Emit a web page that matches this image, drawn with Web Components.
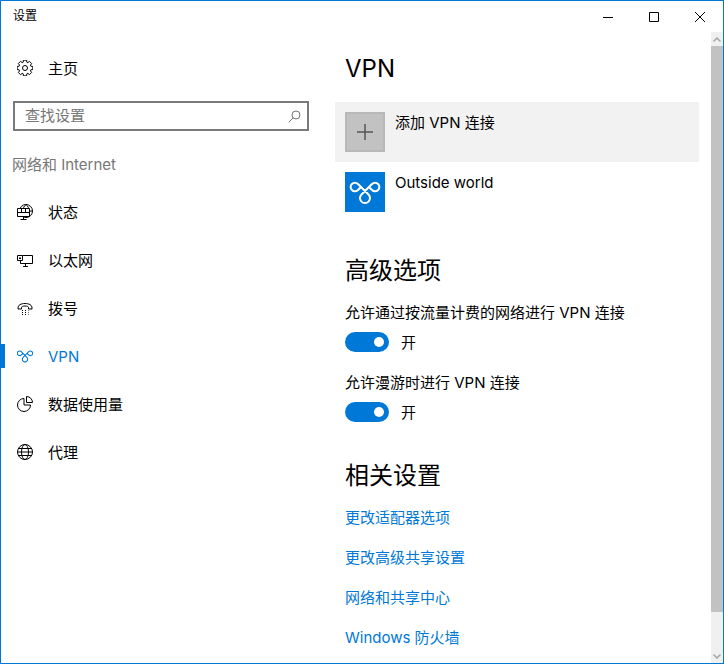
<!DOCTYPE html>
<html lang="zh">
<head>
<meta charset="utf-8">
<title>设置</title>
<style>
  html, body { margin: 0; height: 100%; overflow: hidden; background: #fff; }
  body { font: 15px/24px Inter, "Noto Sans CJK SC", sans-serif; color: #000; }
</style>
</head>
<body>
<settings-window>
  <title-bar>设置</title-bar>
  <side-nav slot="side"></side-nav>
  <vpn-page slot="main"></vpn-page>
  <scroll-bar slot="bar"></scroll-bar>
</settings-window>

<script>
// icons, all on a 16 box except the knot
function gearPath() {
  let d = '';
  for (let i = 0; i < 8; i++) {
    const a = i * Math.PI / 4;
    const pts = [[-0.30, 6.1], [-0.2, 8], [0.2, 8], [0.30, 6.1]];
    pts.forEach((p, j) => {
      const x = 8 + p[1] * Math.sin(a + p[0]);
      const y = 8 - p[1] * Math.cos(a + p[0]);
      d += (i === 0 && j === 0 ? 'M' : 'L') + x.toFixed(2) + ' ' + y.toFixed(2);
    });
  }
  return d + 'Z';
}

const knot = 'M23.500 22.500 13 12A4.300 4.300 0 1 0 13 18L16 15M16.500 22.500 27 12A4.300 4.300 0 1 1 27 18L24 15M16.500 22.500A5 5 0 1 0 23.500 22.500';

const ICONS = {
  home: `<path d="${gearPath()}"/><circle cx="8" cy="8" r="2.500"/>`,
  status: `<circle cx="9" cy="7" r="6.500"/><path d="M9 .5c-2 1.500-3 3.800-3 6.500s1 5 3 6.500c2-1.500 3-3.800 3-6.500S11 2 9 .5zM2.500 7h13"/><path d="M.5 4.500h12v8H.5z" fill="#fff"/><path d="M.5 8.500h12M4.500 4.500v4M8.500 4.500v4M6.500 12.500v2.500M3.500 15.500h6"/>`,
  ether: `<path d="M5.500 3.500h10v8h-12V8.500M8.500 11.500v3M6 14.500h5"/><path d="M.5 3.500h5v5h-5z" fill="#fff"/><path d="M2 5.500h2v1.500H2z" fill="currentColor" stroke="none"/>`,
  dial: `<path d="M1 8C1 5 4 3.500 8 3.500S15 5 15 8v1h-3.500V7.500C11.500 6.500 10 6 8 6S4.500 6.500 4.500 7.500V9H1z"/><path stroke-dasharray="1 2" d="M5 10.500h6.500M5 12.500h6.500M5 14.500h6.500"/>`,
  data: `<path d="M7 2.500a6.500 6.500 0 1 0 6.500 6.500H7z"/><path d="M9.500.5a6 6 0 0 1 6 6h-6z"/>`,
  proxy: `<circle cx="8" cy="8" r="7.500"/><ellipse cx="8" cy="8" rx="3.500" ry="7.500"/><path d="M.5 8h15M1.500 4.500h13M1.500 11.500h13"/>`
};

function lineIcon(name) {
  return `<svg width="16" height="16" viewBox="0 0 16 16" fill="none" stroke="currentColor" stroke-width="1">${ICONS[name]}</svg>`;
}

class SettingsWindow extends HTMLElement {
  constructor() {
    super();
    this.attachShadow({ mode: 'open' });
    this.shadowRoot.innerHTML = `
      <style>
        :host { display: flex; flex-direction: column; box-sizing: border-box; width: 724px; height: 664px; border: 1px solid #0078d7; overflow: hidden; background: #fff; }
        .body { display: flex; flex: 1; min-height: 0; }
        ::slotted([slot=side]) { width: 334px; flex: none; }
        ::slotted([slot=main]) { flex: 1; min-width: 0; }
      </style>
      <slot></slot>
      <div class="body">
        <slot name="side"></slot>
        <slot name="main"></slot>
        <slot name="bar"></slot>
      </div>`;
  }
}

class TitleBar extends HTMLElement {
  constructor() {
    super();
    this.attachShadow({ mode: 'open' });
    this.shadowRoot.innerHTML = `
      <style>
        :host { display: flex; align-items: center; height: 31px; padding-left: 12px; font-size: 12px; }
        .title { flex: 1; margin-top: -2px; }
        .btn { width: 46px; height: 31px; display: flex; align-items: center; justify-content: center; }
        svg { display: block; }
      </style>
      <span class="title"><slot></slot></span>
      <span class="btn"><svg width="10" height="10" viewBox="0 0 10 10" stroke="#000" fill="none"><path d="M0 5.500h10"/></svg></span>
      <span class="btn"><svg width="10" height="10" viewBox="0 0 10 10" stroke="#000" fill="none"><path d="M.5.5h9v9h-9z"/></svg></span>
      <span class="btn"><svg width="10" height="10" viewBox="0 0 10 10" stroke="#000" fill="none"><path d="M0 0l10 10M10 0L0 10"/></svg></span>`;
  }
}

class NavItem extends HTMLElement {
  constructor() {
    super();
    this.attachShadow({ mode: 'open' });
  }
  connectedCallback() {
    const active = this.hasAttribute('active');
    const icon = this.getAttribute('icon');
    this.shadowRoot.innerHTML = `
      <style>
        :host { display: flex; align-items: center; position: relative; height: 48px; padding-left: 16px; gap: 15px; color: ${active ? '#0078d7' : '#000'}; }
        .mark { position: absolute; left: 0; top: 12px; width: 4px; height: 24px; background: #0078d7; }
        .txt { padding-top: 2px; }
        svg { display: block; flex: none; }
      </style>
      ${active ? '<span class="mark"></span>' : ''}
      ${icon === 'vpn'
        ? `<svg width="16" height="16" viewBox="5 5 30 30" fill="none" stroke="currentColor" stroke-width="2"><path d="${knot}"/></svg>`
        : lineIcon(icon)}
      <span class="txt"><slot></slot></span>`;
  }
}

class SearchBox extends HTMLElement {
  constructor() {
    super();
    this.attachShadow({ mode: 'open' });
    this.shadowRoot.innerHTML = `
      <style>
        :host { display: flex; align-items: center; box-sizing: border-box; height: 30px; margin: 9px 26px 0 12px; padding: 0 6px 0 10px; border: 2px solid #7a7a7a; color: #767676; }
        span { flex: 1; }
        svg { display: block; }
      </style>
      <span><slot></slot></span>
      <svg width="13" height="13" viewBox="0 0 13 13" fill="none" stroke="#767676"><circle cx="8" cy="5" r="4"/><path d="M5.200 7.800.7 12.300"/></svg>`;
  }
}

class SideNav extends HTMLElement {
  constructor() {
    super();
    this.attachShadow({ mode: 'open' });
    this.shadowRoot.innerHTML = `
      <style>
        :host { display: block; padding-top: 12px; }
        .cat { margin: 22px 0 11px 11px; color: #767676; }
      </style>
      <nav-item icon="home">主页</nav-item>
      <search-box>查找设置</search-box>
      <div class="cat">网络和 Internet</div>
      <nav-item icon="status">状态</nav-item>
      <nav-item icon="ether">以太网</nav-item>
      <nav-item icon="dial">拨号</nav-item>
      <nav-item icon="vpn" active>VPN</nav-item>
      <nav-item icon="data">数据使用量</nav-item>
      <nav-item icon="proxy">代理</nav-item>`;
  }
}

class VpnTile extends HTMLElement {
  constructor() {
    super();
    this.attachShadow({ mode: 'open' });
  }
  connectedCallback() {
    const add = this.hasAttribute('add');
    this.shadowRoot.innerHTML = `
      <style>
        :host { display: flex; gap: 10px; height: 60px; box-sizing: border-box; padding: 10px; background: ${add ? '#f2f2f2' : '#fff'}; }
        .ico { width: 40px; height: 40px; box-sizing: border-box; display: flex; align-items: center; justify-content: center; flex: none; }
        .plus { background: #c2c2c2; border: 2px solid #b8b8b8; }
        .blue { background: #0078d7; }
        .txt { margin-top: -1px; }
        svg { display: block; }
      </style>
      ${add
        ? '<span class="ico plus"><svg width="16" height="16" viewBox="0 0 16 16" stroke="#555" stroke-width="1.500"><path d="M8 0v16M0 8h16"/></svg></span>'
        : `<span class="ico blue"><svg width="40" height="40" viewBox="0 0 40 40" fill="none" stroke="#fff" stroke-width="2"><path d="${knot}"/></svg></span>`}
      <span class="txt"><slot></slot></span>`;
  }
}

class ToggleRow extends HTMLElement {
  constructor() {
    super();
    this.attachShadow({ mode: 'open' });
    this.shadowRoot.innerHTML = `
      <style>
        :host { display: block; margin-left: 10px; }
        .label { display: block; padding-top: 1px; }
        .row { display: flex; align-items: center; gap: 12px; height: 20px; margin-top: 7px; }
        .sw { width: 44px; height: 20px; border-radius: 10px; background: #0078d7; display: flex; align-items: center; justify-content: flex-end; padding-right: 5px; box-sizing: border-box; }
        .dot { width: 10px; height: 10px; border-radius: 50%; background: #fff; }
        .state { padding-top: 2px; }
      </style>
      <span class="label"><slot></slot></span>
      <div class="row"><span class="sw"><span class="dot"></span></span><span class="state">开</span></div>`;
  }
}

class VpnPage extends HTMLElement {
  constructor() {
    super();
    this.attachShadow({ mode: 'open' });
    this.shadowRoot.innerHTML = `
      <style>
        :host { display: block; padding: 17px 12px 0 0; }
        h2 { margin: 0 0 0 10px; font-size: 24px; line-height: 40px; font-weight: 400; }
        .tiles { margin-top: 13px; }
        .adv { line-height: 36px; margin-top: 31px; margin-bottom: 11px; }
        toggle-row + toggle-row { margin-top: 18px; }
        .rel { line-height: 36px; margin-top: 36px; margin-bottom: 9px; }
        .links { display: flex; flex-direction: column; gap: 10px; margin-left: 10px; }
        a { color: #0078d7; line-height: 30px; text-decoration: none; }
      </style>
      <h2>VPN</h2>
      <div class="tiles">
        <vpn-tile add>添加 VPN 连接</vpn-tile>
        <vpn-tile>Outside world</vpn-tile>
      </div>
      <h2 class="adv">高级选项</h2>
      <toggle-row>允许通过按流量计费的网络进行 VPN 连接</toggle-row>
      <toggle-row>允许漫游时进行 VPN 连接</toggle-row>
      <h2 class="rel">相关设置</h2>
      <div class="links">
        <a href="#">更改适配器选项</a>
        <a href="#">更改高级共享设置</a>
        <a href="#">网络和共享中心</a>
        <a href="#">Windows 防火墙</a>
      </div>`;
  }
}

class ScrollBar extends HTMLElement {
  constructor() {
    super();
    this.attachShadow({ mode: 'open' });
    this.shadowRoot.innerHTML = `
      <style>
        :host { display: flex; flex-direction: column; width: 12px; flex: none; background: #f0f0f0; }
        .arrow { height: 14px; display: flex; align-items: center; justify-content: center; }
        .thumb { height: 566px; background: #c2c2c2; }
        .space { flex: 1; }
        svg { display: block; }
      </style>
      <span class="arrow"><svg width="8" height="5" viewBox="0 0 8 5" fill="none" stroke="#a6a6a6" stroke-width="1.500"><path d="M.5 4.500l3.500-3.500 3.500 3.500"/></svg></span>
      <div class="thumb"></div>
      <div class="space"></div>
      <span class="arrow"><svg width="8" height="5" viewBox="0 0 8 5" fill="none" stroke="#a6a6a6" stroke-width="1.500"><path d="M.5.5l3.500 3.500 3.500-3.500"/></svg></span>`;
  }
}

customElements.define('settings-window', SettingsWindow);
customElements.define('title-bar', TitleBar);
customElements.define('nav-item', NavItem);
customElements.define('search-box', SearchBox);
customElements.define('side-nav', SideNav);
customElements.define('vpn-tile', VpnTile);
customElements.define('toggle-row', ToggleRow);
customElements.define('vpn-page', VpnPage);
customElements.define('scroll-bar', ScrollBar);
</script>
</body>
</html>
